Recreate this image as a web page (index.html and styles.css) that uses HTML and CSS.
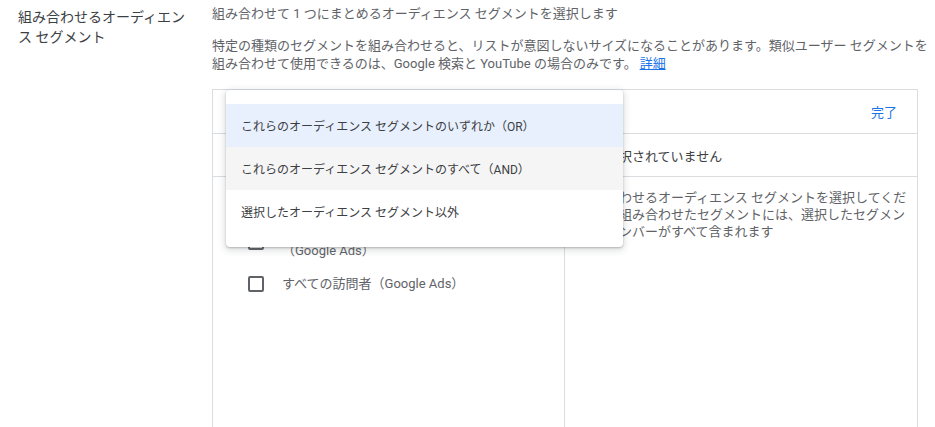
FILE: index.html
```html
<!DOCTYPE html>
<html lang="ja">
<head>
  <meta charset="utf-8">
  <title>組み合わせるオーディエンス セグメント</title>
  <link rel="stylesheet" href="styles.css">
</head>
<body>
  <div class="setting">
    <div class="setting-label">組み合わせるオーディエンス セグメント</div>

    <div class="setting-body">
      <p class="hint">組み合わせて 1 つにまとめるオーディエンス セグメントを選択します</p>
      <p class="hint note">特定の種類のセグメントを組み合わせると、リストが意図しないサイズになることがあります。類似ユーザー セグメントを<br>組み合わせて使用できるのは、Google 検索と YouTube の場合のみです。<a href="#">詳細</a></p>

      <div class="picker">
        <div class="picker-header">
          <div class="picker-select">これらのオーディエンス セグメントのいずれか（OR）</div>
          <a class="done" href="#">完了</a>
        </div>

        <div class="picker-cols">
          <div class="col">
            <div class="col-head">セグメントを検索</div>
            <ul class="segments">
              <li><span class="checkbox"></span><span>ウェブサイトのすべての訪問者</span></li>
              <li><span class="checkbox"></span><span>過去 30 日間にコンバージョンに至ったユーザー<br>（Google Ads）</span></li>
              <li><span class="checkbox"></span><span>すべての訪問者（Google Ads）</span></li>
            </ul>
          </div>
          <div class="col">
            <div class="col-head">何も選択されていません</div>
            <p class="col-text">組み合わせるオーディエンス セグメントを選択してください。組み合わせたセグメントには、選択したセグメントのメンバーがすべて含まれます</p>
          </div>
        </div>

        <ul class="menu">
          <li class="selected">これらのオーディエンス セグメントのいずれか（OR）</li>
          <li class="hover">これらのオーディエンス セグメントのすべて（AND）</li>
          <li>選択したオーディエンス セグメント以外</li>
        </ul>
      </div>
    </div>
  </div>
</body>
</html>
```

FILE: styles.css
```css
:root {
  --text: #3c4043;
  --muted: #5f6368;
  --border: #dadce0;
  --blue: #1a73e8;
}

body {
  margin: 0;
  background: #ffffff;
  color: var(--text);
  font-family: Roboto, "Noto Sans CJK JP", sans-serif;
  overflow: hidden;
}

.setting {
  display: flex;
  padding-top: 5px;
}

.setting-label {
  flex: 0 0 176px;
  margin: 2px 18px 0 18px;
  font-size: 14px;
  line-height: 20px;
}

.setting-body {
  width: 706px;
}

.hint {
  margin: 0;
  font-size: 13px;
  line-height: 18px;
  color: var(--muted);
  white-space: nowrap;
}

.note {
  margin-top: 14px;
}

.note a {
  margin-left: 3px;
  color: var(--blue);
}

.picker {
  position: relative;
  margin-top: 16px;
  height: 360px;
  border: 1px solid var(--border);
  border-bottom: none;
}

.picker-header {
  display: flex;
  align-items: center;
  justify-content: space-between;
  height: 43px;
  padding: 0 20px 0 16px;
  border-bottom: 1px solid var(--border);
  font-size: 13px;
}

.done {
  color: var(--blue);
  text-decoration: none;
}

.picker-cols {
  display: grid;
  grid-template-columns: 352px 1fr;
  height: 100%;
}

.col:first-child {
  border-right: 1px solid var(--border);
}

.col-head {
  display: flex;
  align-items: center;
  height: 42px;
  padding-left: 15px;
  border-bottom: 1px solid var(--border);
  font-size: 13px;
}

.segments {
  list-style: none;
  margin: 0;
  padding: 14px 0 0 35px;
  font-size: 13px;
  line-height: 18px;
  color: var(--muted);
}

.segments li {
  display: flex;
  align-items: center;
  gap: 18px;
  margin-bottom: 15px;
}

.checkbox {
  flex: 0 0 auto;
  width: 12px;
  height: 12px;
  border: 2px solid var(--muted);
  border-radius: 2px;
}

.col-text {
  margin: 0;
  padding: 12px 7px 0 15px;
  font-size: 13px;
  line-height: 17px;
  color: var(--muted);
}

.menu {
  position: absolute;
  top: 0;
  left: 13px;
  width: 397px;
  list-style: none;
  margin: 0;
  padding: 14px 0;
  background: #ffffff;
  border-radius: 4px;
  box-shadow: 0 1px 2px rgba(60, 64, 67, 0.3), 0 2px 6px 2px rgba(60, 64, 67, 0.15);
  font-size: 12px;
  color: var(--text);
}

.menu li {
  display: flex;
  align-items: center;
  height: 43px;
  padding-left: 15px;
}

.menu .selected {
  background: #e8f0fe;
}

.menu .hover {
  background: #f5f5f5;
}
```
